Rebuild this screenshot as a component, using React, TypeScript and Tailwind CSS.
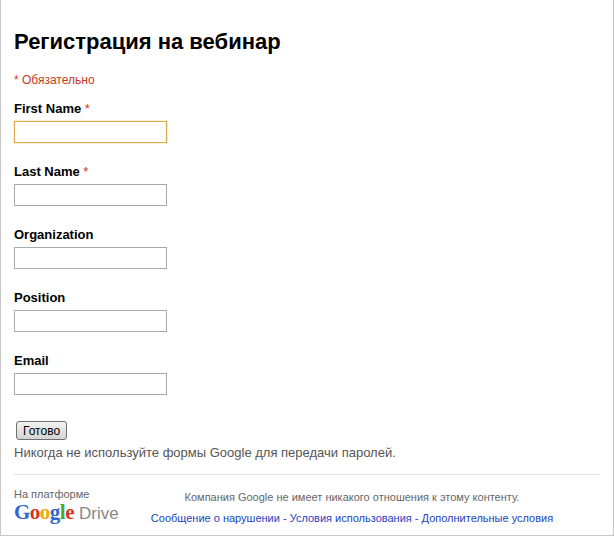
export default function App() {
  const fields = [
    { l: "First Name", r: true, focus: true },
    { l: "Last Name", r: true },
    { l: "Organization" },
    { l: "Position" },
    { l: "Email" },
  ];
  return (
    <div className="w-[614px] h-[537px] bg-white" style={{ fontFamily: "Arial, 'Liberation Sans', sans-serif" }}>
      <div className="h-[536px] border-l border-r border-b border-[#c8c8c8] px-[13px] pt-[28px]">
        <h1 className="text-[22px] font-bold text-black leading-[28px]">Регистрация на вебинар</h1>
        <div className="mt-[16px] text-[12px] text-[#c43b1d] leading-[16px]">* Обязательно</div>
        <div className="mt-[13px] flex flex-col gap-[21px]">
          {fields.map((f) => (
            <div key={f.l} className="flex flex-col">
              <div className="text-[13px] font-bold text-black leading-[16px]">
                {f.l}
                {f.r && <span className="font-normal text-[#c43b1d]"> *</span>}
              </div>
              <input
                className={
                  "mt-[4px] w-[153px] h-[22px] border bg-white outline-none " +
                  (f.focus ? "border-[#e0a94a] shadow-[0_0_1px_#e0a94a]" : "border-[#a9a9a9]")
                }
              />
            </div>
          ))}
        </div>
        <button className="mt-[26px] ml-[2px] h-[19px] px-[6px] text-[12px] leading-[16px] border border-[#707070] rounded-[3px] bg-gradient-to-b from-[#f2f2f2] to-[#d4d4d4] text-black">
          Готово
        </button>
        <div className="mt-[3px] text-[13px] text-[#555] leading-[16px]">Никогда не используйте формы Google для передачи паролей.</div>
        <div className="mt-[13px] mr-[1px] border-t border-[#e3e3e3]" />
        <div className="flex mt-[12px]">
          <div className="w-[130px]">
            <div className="text-[11px] text-[#666] leading-[14px]">На платформе</div>
            <div className="flex items-baseline gap-[5px] leading-[22px]">
              <span className="text-[21px] font-bold tracking-[-0.5px]" style={{ fontFamily: "'Liberation Serif', serif" }}>
                <span className="text-[#3366cc]">G</span>
                <span className="text-[#dd3322]">o</span>
                <span className="text-[#eeaa00]">o</span>
                <span className="text-[#3366cc]">g</span>
                <span className="text-[#44aa33]">l</span>
                <span className="text-[#dd3322]">e</span>
              </span>
              <span className="text-[17px] text-[#888]">Drive</span>
            </div>
          </div>
          <div className="flex-1 flex flex-col items-center text-[11px] leading-[14px] pr-[40px]">
            <div className="mt-[3px] text-[#666]">Компания Google не имеет никакого отношения к этому контенту.</div>
            <div className="mt-[7px] text-[#2244bb]">
              Сообщение о нарушении - Условия использования - Дополнительные условия
            </div>
          </div>
        </div>
      </div>
    </div>
  );
}
